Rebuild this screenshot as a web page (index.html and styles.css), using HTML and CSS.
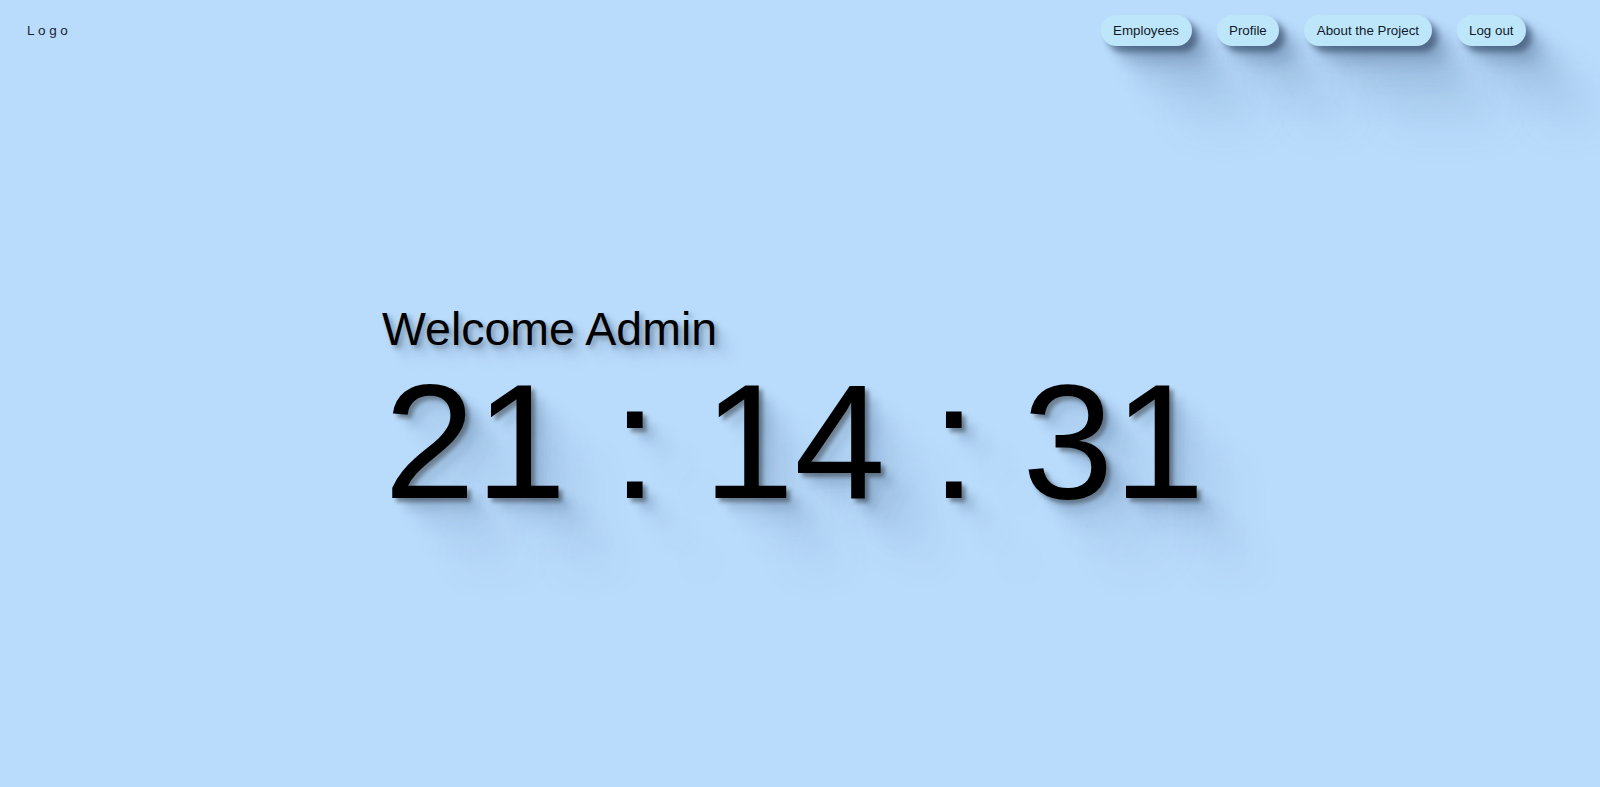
FILE: index.html
```html
<!DOCTYPE html>
<html lang="en">
<head>
<meta charset="utf-8">
<title>Dashboard</title>
<link rel="stylesheet" href="styles.css">
</head>
<body>
  <header class="topbar">
    <div class="logo">Logo</div>
    <nav class="nav">
      <button class="nav-btn">Employees</button>
      <button class="nav-btn">Profile</button>
      <button class="nav-btn">About the Project</button>
      <button class="nav-btn">Log out</button>
    </nav>
  </header>
  <main class="main">
    <section class="greeting">
      <h1 class="welcome">Welcome Admin</h1>
      <div class="clock">21 : 14 : 31</div>
    </section>
  </main>
</body>
</html>
```
FILE: styles.css
```css
html, body {
  margin: 0;
  padding: 0;
}
body {
  background: #badcfc;
  font-family: "Liberation Sans", Arial, sans-serif;
  color: #000;
  height: 787px;
  overflow: hidden;
}
.topbar {
  display: flex;
  justify-content: space-between;
  align-items: center;
  height: 60px;
  padding: 0 74px 0 27px;
}
.logo {
  font-size: 13.5px;
  letter-spacing: 3.6px;
  color: #1b2232;
}
.nav {
  display: flex;
  gap: 25px;
}
.nav-btn {
  font-family: "Liberation Sans", Arial, sans-serif;
  font-size: 13.333px;
  line-height: 15px;
  color: #111a28;
  background: #bee6fb;
  border: none;
  border-radius: 16px;
  padding: 8px 12.5px;
  box-shadow: 6px 6px 6px rgba(20, 40, 70, 0.5),
              16px 16px 14px rgba(30, 55, 90, 0.22),
              30px 30px 24px rgba(30, 60, 100, 0.15),
              50px 52px 35px rgba(30, 60, 100, 0.11),
              78px 80px 45px rgba(30, 60, 100, 0.08);
}
.main {
  display: flex;
  justify-content: flex-start;
  padding: 246px 0 0 382px;
}
.greeting {
  display: flex;
  flex-direction: column;
  align-items: flex-start;
}
.welcome {
  margin: 0;
  font-weight: normal;
  font-size: 46.5px;
  line-height: 46px;
  text-shadow: 3px 3px 5px rgba(0, 0, 0, 0.3),
               8px 8px 8px rgba(20, 50, 90, 0.15),
               16px 16px 14px rgba(20, 50, 90, 0.1);
}
.clock {
  font-size: 164px;
  line-height: 168px;
  margin-top: 6px;
  margin-left: 2px;
  white-space: pre;
  text-shadow: 4px 4px 4px rgba(0, 0, 0, 0.4),
               12px 12px 10px rgba(20, 50, 90, 0.16),
               24px 24px 18px rgba(20, 50, 90, 0.11),
               42px 44px 28px rgba(20, 50, 90, 0.08),
               66px 72px 40px rgba(20, 50, 90, 0.07);
}
```
